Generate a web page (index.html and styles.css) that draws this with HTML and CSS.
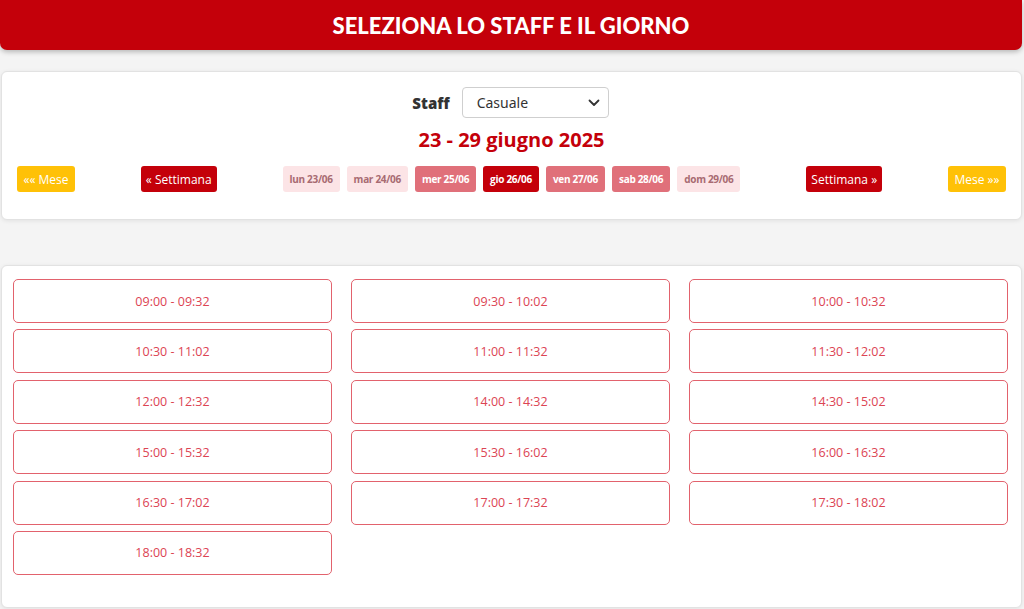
FILE: index.html
```html
<!DOCTYPE html>
<html lang="it">
<head>
<meta charset="utf-8">
<title>Seleziona lo staff e il giorno</title>
<link rel="stylesheet" href="styles.css">
</head>
<body>
<div class="page">
  <header class="banner"><h1>SELEZIONA LO STAFF E IL GIORNO</h1></header>

  <section class="card picker">
    <div class="staff-row">
      <label class="staff-label" for="staff">Staff</label>
      <div class="select">
        <span>Casuale</span>
        <svg width="12" height="8" viewBox="0 0 12 8"><path d="M1.5 1.5 L6 6 L10.5 1.5" fill="none" stroke="#333" stroke-width="1.8" stroke-linecap="round" stroke-linejoin="round"/></svg>
      </div>
    </div>
    <h2 class="range">23 - 29 giugno 2025</h2>
    <div class="nav-row">
      <button class="btn yellow">«« Mese</button>
      <button class="btn red">« Settimana</button>
      <div class="days">
        <span class="day light">lun 23/06</span>
        <span class="day light">mar 24/06</span>
        <span class="day mid">mer 25/06</span>
        <span class="day active">gio 26/06</span>
        <span class="day mid">ven 27/06</span>
        <span class="day mid">sab 28/06</span>
        <span class="day light">dom 29/06</span>
      </div>
      <button class="btn red">Settimana »</button>
      <button class="btn yellow">Mese »»</button>
    </div>
  </section>

  <section class="card slots">
    <div class="slot">09:00 - 09:32</div>
    <div class="slot">09:30 - 10:02</div>
    <div class="slot">10:00 - 10:32</div>
    <div class="slot">10:30 - 11:02</div>
    <div class="slot">11:00 - 11:32</div>
    <div class="slot">11:30 - 12:02</div>
    <div class="slot">12:00 - 12:32</div>
    <div class="slot">14:00 - 14:32</div>
    <div class="slot">14:30 - 15:02</div>
    <div class="slot">15:00 - 15:32</div>
    <div class="slot">15:30 - 16:02</div>
    <div class="slot">16:00 - 16:32</div>
    <div class="slot">16:30 - 17:02</div>
    <div class="slot">17:00 - 17:32</div>
    <div class="slot">17:30 - 18:02</div>
    <div class="slot">18:00 - 18:32</div>
  </section>
</div>
</body>
</html>
```

FILE: styles.css
```css
* { box-sizing: border-box; }
html, body { margin: 0; padding: 0; }
body {
  background: #f4f4f4;
  font-family: "Open Sans", "Noto Sans", sans-serif;
  color: #333;
  height: 609px;
  overflow: hidden;
}
.page { width: 1023px; }

.banner {
  height: 50px;
  background: #c4000a;
  border-radius: 0 0 7px 7px;
  box-shadow: 0 2px 5px rgba(0,0,0,0.25);
  display: flex;
  align-items: center;
  justify-content: center;
  width: 1022px;
}
.banner h1 {
  margin: 0;
  color: #fff;
  font-family: "Lato", "Open Sans", sans-serif;
  font-weight: 900;
  font-size: 22px;
  letter-spacing: 0;
}

.card {
  background: #fff;
  border: 1px solid #e2e2e2;
  border-radius: 6px;
  box-shadow: 0 1px 4px rgba(0,0,0,0.08);
  margin-left: 1px;
  width: 1021px;
}

.picker {
  margin-top: 21px;
  height: 149px;
  padding: 15px 15px 0 15px;
}
.staff-row {
  display: flex;
  justify-content: center;
  align-items: center;
  gap: 12px;
  margin-left: -2px;
}
.staff-label {
  font-family: "Open Sans", sans-serif;
  font-weight: 800;
  font-size: 15px;
  color: #333;
}
.select {
  width: 147px;
  height: 31px;
  border: 1px solid #cfcfcf;
  border-radius: 4px;
  display: flex;
  align-items: center;
  justify-content: space-between;
  padding: 0 8px 0 14px;
  font-family: "Noto Sans", sans-serif;
  font-size: 14px;
  color: #333;
}
.range {
  margin: 8px 0 0 0;
  text-align: center;
  color: #c4000a;
  font-family: "Open Sans", sans-serif;
  font-weight: 700;
  font-size: 20px;
  line-height: 28px;
}
.nav-row {
  margin-top: 12px;
  display: flex;
  justify-content: space-between;
  align-items: center;
}
.btn {
  border: none;
  border-radius: 3px;
  height: 26px;
  padding: 0 12px;
  font-family: "Open Sans", sans-serif;
  font-size: 12px;
  color: #fff;
}
.btn.yellow { background: #ffc107; width: 58px; padding: 0; }
.btn.red { background: #c4000a; width: 76px; padding: 0; }
.days { display: flex; gap: 7px; }
.day {
  height: 26px;
  display: flex;
  align-items: center;
  padding: 0 7px;
  border-radius: 3px;
  font-family: "Open Sans", sans-serif;
  font-weight: 700;
  font-size: 10px;
  letter-spacing: -0.3px;
}
.day.light { background: #fce4e6; color: #a86b72; }
.day.mid { background: #e0707a; color: #fff; }
.day.active { background: #c4000a; color: #fff; }

.slots {
  margin-top: 45px;
  height: 343px;
  padding: 13px 13px 0 11px;
  display: grid;
  grid-template-columns: repeat(3, 1fr);
  column-gap: 19px;
  row-gap: 6.4px;
  align-content: start;
}
.slot {
  height: 44px;
  border: 1px solid #e2626d;
  border-radius: 5px;
  display: flex;
  align-items: center;
  justify-content: center;
  font-family: "Open Sans", sans-serif;
  font-size: 12.5px;
  color: #dc4453;
}
```
